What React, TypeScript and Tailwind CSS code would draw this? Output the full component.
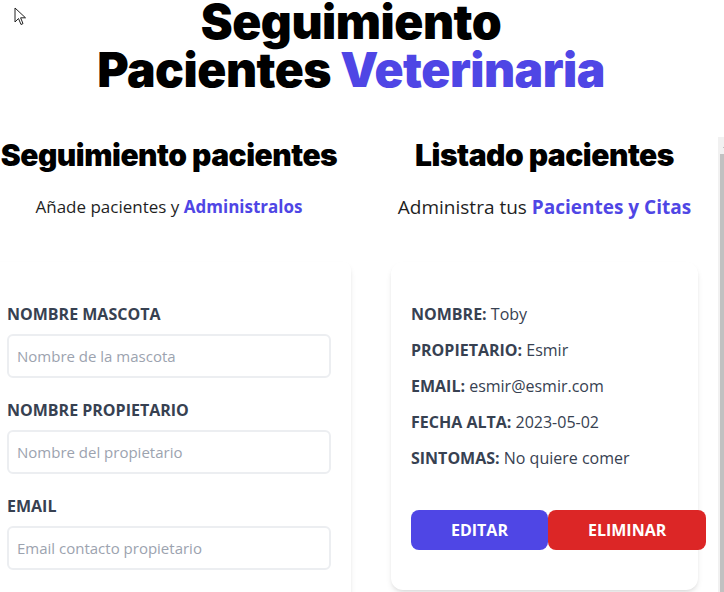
import React from "react";

const Campo = ({ id, label, placeholder }: { id: string; label: string; placeholder: string }) => (
  <div className="mb-5">
    <label htmlFor={id} className="block font-bold uppercase text-[#374151]">
      {label}
    </label>
    <input
      id={id}
      type="text"
      placeholder={placeholder}
      className="mt-2 h-[44px] w-full rounded-md border-2 border-[#eceef1] px-2 text-[15px] placeholder-[#9ca3af] outline-none"
    />
  </div>
);

const Dato = ({ label, valor }: { label: string; valor: string }) => (
  <p className="mb-3 font-bold uppercase text-[#374151]">
    {label}: <span className="font-normal normal-case">{valor}</span>
  </p>
);

const App: React.FC = () => {
  return (
    <div className="relative h-[592px] w-[724px] overflow-hidden bg-white font-['Open_Sans',sans-serif] text-[#1f1f1f]">
      <div className="-ml-[33px] w-[768px]">
        <h1 className="-mt-[2px] mx-auto w-2/3 text-center font-['Inter',sans-serif] text-5xl font-black leading-[48px] tracking-[-0.5px] text-black">
          <span className="block">Seguimiento</span>
          <span className="block">
            Pacientes <span className="text-[#4f46e5]">Veterinaria</span>
          </span>
        </h1>

        <div className="mt-[43px] flex">
          <div className="mx-5 w-[364px] shrink-0">
            <h2 className="text-center font-['Inter',sans-serif] text-3xl font-black tracking-[-0.5px] text-black">
              Seguimiento pacientes
            </h2>
            <p className="mb-[41px] mt-5 text-center text-[17px] leading-7">
              Añade pacientes y <span className="font-bold text-[#4f46e5]">Administralos</span>
            </p>
            <form className="mb-10 rounded-lg bg-white px-5 py-10 shadow-md">
              <Campo id="mascota" label="Nombre mascota" placeholder="Nombre de la mascota" />
              <Campo id="propietario" label="Nombre propietario" placeholder="Nombre del propietario" />
              <Campo id="email" label="Email" placeholder="Email contacto propietario" />
            </form>
          </div>

          <div className="flex h-[470px] w-[364px] shrink-0">
            <div className="w-[347px] shrink-0">
              <h2 className="text-center font-['Inter',sans-serif] text-3xl font-black tracking-[-0.5px] text-black">
                Listado pacientes
              </h2>
              <p className="mb-[41px] mt-5 text-center text-[19px] leading-7">
                Administra tus <span className="font-bold text-[#4f46e5]">Pacientes y Citas</span>
              </p>
              <div className="mx-5 rounded-xl bg-white px-5 py-10 shadow-md">
                <Dato label="Nombre" valor="Toby" />
                <Dato label="Propietario" valor="Esmir" />
                <Dato label="Email" valor="esmir@esmir.com" />
                <Dato label="Fecha alta" valor="2023-05-02" />
                <Dato label="Sintomas" valor="No quiere comer" />
                <div className="mt-10 flex justify-between">
                  <button type="button" className="rounded-lg bg-[#4f46e5] px-10 py-2 font-bold uppercase text-white">
                    Editar
                  </button>
                  <button type="button" className="rounded-lg bg-[#dc2626] px-10 py-2 font-bold uppercase text-white">
                    Eliminar
                  </button>
                </div>
              </div>
            </div>

            {/* barra de scroll */}
            <div className="flex w-[17px] shrink-0 flex-col bg-[#f1f1f1]">
              <div className="flex h-[17px] items-center justify-center">
                <svg width="7" height="4" viewBox="0 0 7 4">
                  <path d="M0 4 L3.5 0 L7 4 Z" fill="#a3a3a3" />
                </svg>
              </div>
              <div className="mx-[2px] flex-1 bg-[#c1c1c1]" />
            </div>
          </div>
        </div>
      </div>

      <svg className="absolute left-[14px] top-[7px]" width="13" height="19" viewBox="0 0 13 19">
        <path d="M1 1 L1 15 L4.5 11.5 L7 17.5 L9 16.6 L6.6 10.8 L11.5 10.8 Z" fill="white" stroke="#222" strokeWidth="1" strokeLinejoin="round" />
      </svg>
    </div>
  );
};

export default App;
